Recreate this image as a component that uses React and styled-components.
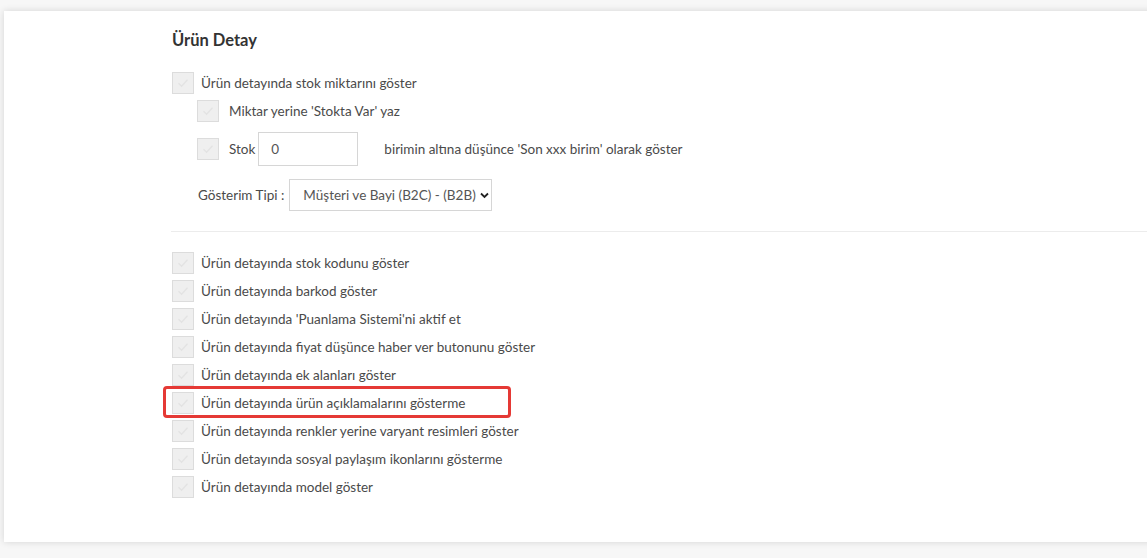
import * as React from "react";
import styled, { createGlobalStyle } from "styled-components";

const Global = createGlobalStyle`
  html, body {
    margin: 0;
    padding: 0;
    background: #f7f7f7;
    font-family: Lato, "Liberation Sans", sans-serif;
    color: #444;
    overflow: hidden;
  }
`;

const Page = styled.div`
  width: 1147px;
  height: 558px;
  overflow: hidden;
  padding: 11px 0 0 4px;
  box-sizing: border-box;
`;

const Card = styled.div`
  width: 1170px;
  height: 531px;
  background: #fff;
  box-shadow: 0 0 7px rgba(0, 0, 0, 0.14);
  box-sizing: border-box;
  padding: 17px 0 0 168px;
`;

const Title = styled.h3`
  margin: 0 0 20px;
  font-size: 16.5px;
  font-weight: 700;
  color: #333;
  line-height: 24px;
`;

const Row = styled.div`
  position: relative;
  display: flex;
  align-items: center;
  gap: ${(p) => p.$gap || 7}px;
  margin-left: ${(p) => p.$indent || 0}px;
  height: ${(p) => p.$h || 22}px;
  margin-bottom: ${(p) => (p.$mb === undefined ? 6 : p.$mb)}px;
  font-size: 13.5px;
`;

const Box = styled.span`
  width: 22px;
  height: 22px;
  box-sizing: border-box;
  border: 1px solid #dcdcdc;
  background: #efefef;
  display: flex;
  align-items: center;
  justify-content: center;
  flex: 0 0 22px;
`;

const Label = styled.span`
  white-space: nowrap;
  color: #4a4a4a;
`;

const NumInput = styled.input`
  width: 100px;
  height: 34px;
  box-sizing: border-box;
  border: 1px solid #d6d6d6;
  padding: 0 12px;
  font: inherit;
  font-size: 13.5px;
  color: #555;
  margin: 0 16px 0 -7px;
  outline: none;
`;

const SelectBox = styled.div`
  width: 203px;
  height: 32px;
  box-sizing: border-box;
  border: 1px solid #d6d6d6;
  display: flex;
  align-items: center;
  padding: 0 0 0 13px;
  gap: 4px;
  color: #555;
  white-space: nowrap;
  margin-left: -2px;
`;

const Divider = styled.div`
  height: 1px;
  background: #ececec;
  margin: 20px 0 20px -1px;
`;

const Highlight = styled.div`
  position: absolute;
  left: -9px;
  top: -6px;
  width: 342px;
  height: 26px;
  border: 3px solid #e53935;
  border-radius: 4px;
`;

const Check = () => (
  <Box>
    <svg width="12" height="10" viewBox="0 0 12 10">
      <path d="M1.5 5.2 L4.6 8.2 L10.5 1.8" fill="none" stroke="#e3e3e3" strokeWidth="1.3" />
    </svg>
  </Box>
);

const Chevron = () => (
  <svg width="9" height="7" viewBox="0 0 9 7">
    <path d="M1 1.5 L4.5 5 L8 1.5" fill="none" stroke="#222" strokeWidth="1.8" />
  </svg>
);

const list = [
  "Ürün detayında stok kodunu göster",
  "Ürün detayında barkod göster",
  "Ürün detayında 'Puanlama Sistemi'ni aktif et",
  "Ürün detayında fiyat düşünce haber ver butonunu göster",
  "Ürün detayında ek alanları göster",
  "Ürün detayında ürün açıklamalarını gösterme",
  "Ürün detayında renkler yerine varyant resimleri göster",
  "Ürün detayında sosyal paylaşım ikonlarını gösterme",
  "Ürün detayında model göster",
];

export default function App() {
  return (
    <Page>
      <Global />
      <Card>
        <Title>Ürün Detay</Title>
        <Row>
          <Check />
          <Label>Ürün detayında stok miktarını göster</Label>
        </Row>
        <Row $indent={25} $gap={10} $mb={10}>
          <Check />
          <Label>Miktar yerine 'Stokta Var' yaz</Label>
        </Row>
        <Row $indent={25} $gap={10} $h={34} $mb={13}>
          <Check />
          <Label>Stok</Label>
          <NumInput defaultValue="0" />
          <Label>birimin altına düşünce 'Son xxx birim' olarak göster</Label>
        </Row>
        <Row $indent={26} $h={32} $mb={0}>
          <Label>Gösterim Tipi :</Label>
          <SelectBox>
            <span>Müşteri ve Bayi (B2C) - (B2B)</span>
            <Chevron />
          </SelectBox>
        </Row>
        <Divider />
        {list.map((t, i) => (
          <Row key={t}>
            {i === 5 && <Highlight />}
            <Check />
            <Label>{t}</Label>
          </Row>
        ))}
      </Card>
    </Page>
  );
}
